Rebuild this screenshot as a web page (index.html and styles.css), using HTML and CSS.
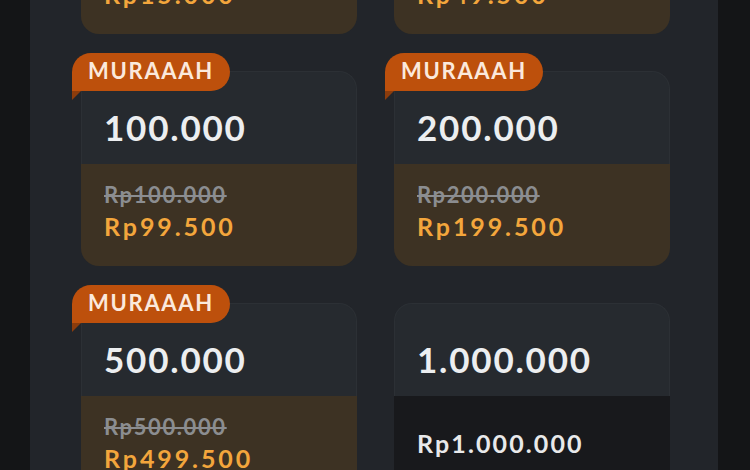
FILE: index.html
```html
<!DOCTYPE html>
<html lang="id">
<head>
    <meta charset="UTF-8">
    <meta name="viewport" content="width=device-width, initial-scale=1.0">
    <title>Pilih Nominal</title>
    <link rel="stylesheet" href="styles.css">
</head>
<body>
    <div class="panel">
        <div class="grid">
            <div class="card promo">
                <div class="amount">10.000</div>
                <div class="price-box">
                    <div class="old">Rp10.000</div>
                    <div class="price">Rp15.000</div>
                </div>
            </div>
            <div class="card promo">
                <div class="amount">50.000</div>
                <div class="price-box">
                    <div class="old">Rp50.000</div>
                    <div class="price">Rp49.500</div>
                </div>
            </div>

            <div class="card promo">
                <span class="badge">MURAAAH</span>
                <div class="amount">100.000</div>
                <div class="price-box">
                    <div class="old">Rp100.000</div>
                    <div class="price">Rp99.500</div>
                </div>
            </div>
            <div class="card promo">
                <span class="badge">MURAAAH</span>
                <div class="amount">200.000</div>
                <div class="price-box">
                    <div class="old">Rp200.000</div>
                    <div class="price">Rp199.500</div>
                </div>
            </div>

            <div class="card promo">
                <span class="badge">MURAAAH</span>
                <div class="amount">500.000</div>
                <div class="price-box">
                    <div class="old">Rp500.000</div>
                    <div class="price">Rp499.500</div>
                </div>
            </div>
            <div class="card">
                <div class="amount">1.000.000</div>
                <div class="price-box">
                    <div class="price">Rp1.000.000</div>
                </div>
            </div>
        </div>
    </div>
</body>
</html>
```

FILE: styles.css
```css
* { margin: 0; padding: 0; box-sizing: border-box; }
body {
    font-family: "Lato", "Noto Sans", sans-serif;
    background: #141517;
    height: 100vh;
    overflow: hidden;
}
.panel {
    margin: 0 32px 0 30px;
    height: 100vh;
    background: #22252a;
    overflow: hidden;
}
.grid {
    display: grid;
    grid-template-columns: 276px 276px;
    column-gap: 37px;
    row-gap: 37px;
    padding-left: 51px;
    margin-top: -161px;
}
.card { position: relative; height: 195px; display: flex; flex-direction: column; }
.amount {
    height: 93px;
    padding: 37px 22px 0;
    background: #262a2f;
    border: 1px solid #2c3035;
    border-bottom: none;
    border-radius: 18px 18px 0 0;
    color: #eceef0;
    font-size: 35px;
    font-weight: 700;
    letter-spacing: 1.8px;
    line-height: 36px;
}
.price-box {
    flex: 1;
    padding: 17px 23px 0;
    background: #3d3223;
    border-radius: 0 0 18px 18px;
}
.card:not(.promo) .price-box { background: #18191c; padding-top: 30px; border-radius: 0; }
.old {
    color: #8b8d90;
    font-size: 22px;
    font-weight: 700;
    letter-spacing: 1.6px;
    line-height: 28px;
    text-decoration: line-through;
}
.price {
    color: #f3a63c;
    font-size: 25px;
    font-weight: 700;
    letter-spacing: 2.9px;
    line-height: 34px;
}
.card:not(.promo) .price { color: #e8e9ea; letter-spacing: 2.1px; }
.badge {
    position: absolute;
    top: -18px;
    left: -9px;
    width: 158px;
    height: 38px;
    padding-top: 5px;
    text-align: center;
    background: #bd500c;
    border-radius: 19px 19px 19px 0;
    color: #fbe9dc;
    font-size: 22px;
    font-weight: 700;
    letter-spacing: 1.7px;
    line-height: 26px;
    z-index: 1;
}
.badge::after {
    content: "";
    position: absolute;
    left: 0;
    top: 38px;
    border-top: 9px solid #8c3c0c;
    border-right: 9px solid transparent;
}
```
